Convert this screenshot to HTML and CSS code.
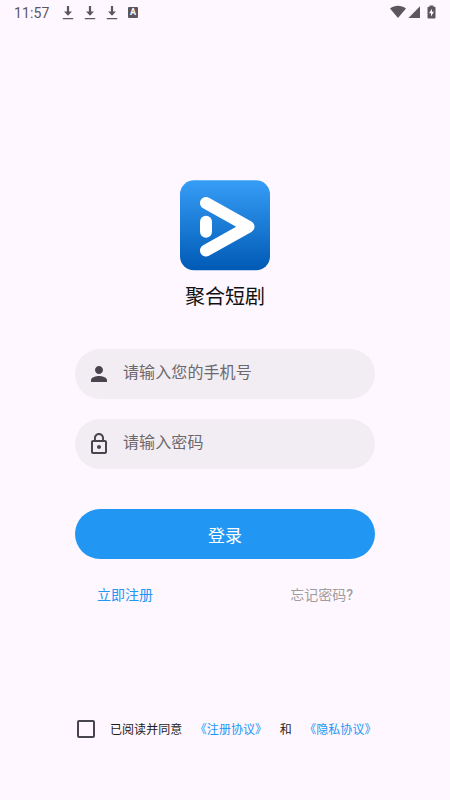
FILE: index.html
```html
<!DOCTYPE html>
<html lang="zh-CN">
<head>
<meta charset="utf-8">
<meta name="viewport" content="width=device-width, initial-scale=1">
<title>聚合短剧</title>
<link rel="stylesheet" href="styles.css">
</head>
<body>
<header class="status">
  <span class="clock">11:57</span>
  <svg class="download" viewBox="0 0 12 14"><path d="M4.900 0h2.200v5.500h2.900L6 9.800 2 5.500h2.900zM.8 12h10.400v1.200H.8z"/></svg>
  <svg class="download" viewBox="0 0 12 14"><path d="M4.900 0h2.200v5.500h2.900L6 9.800 2 5.500h2.900zM.8 12h10.400v1.200H.8z"/></svg>
  <svg class="download" viewBox="0 0 12 14"><path d="M4.900 0h2.200v5.500h2.900L6 9.800 2 5.500h2.900zM.8 12h10.400v1.200H.8z"/></svg>
  <span class="badge">A</span>
  <svg class="signals" viewBox="0 0 46 14">
    <path d="M0 2.400C4.800-1.200 11.200-1.200 16 2.400L8 12z"/>
    <path d="M30 .3v11.700H18.500z"/>
    <path fill-rule="evenodd" d="M39.600-.5h3.800V.7h1.100q1 0 1 1v9.700q0 1-1 1h-6q-1 0-1-1V1.700q0-1 1-1h1.100zM42 2.700l-3 4.500h2v3.200l3-4.600h-2z"/>
  </svg>
</header>
<main class="login">
  <svg class="logo" viewBox="0 0 90 90">
    <defs>
      <linearGradient id="sky" x1="0" y1="0" x2="0" y2="1">
        <stop offset="0" stop-color="#369df6"/>
        <stop offset="1" stop-color="#005ab5"/>
      </linearGradient>
    </defs>
    <rect y=".3" width="90" height="90" rx="14" fill="url(#sky)"/>
    <path d="M26 23L68.500 46.700 26 70.500" fill="none" stroke="#fff" stroke-width="12" stroke-linecap="round" stroke-linejoin="round"/>
    <rect x="20" y="35.800" width="12" height="22" rx="6" fill="#fff"/>
  </svg>
  <h1 class="title">聚合短剧</h1>
  <form class="form">
    <label class="field">
      <svg class="icon" viewBox="0 0 24 24"><path d="M12 12c2.210 0 4-1.790 4-4s-1.790-4-4-4-4 1.790-4 4 1.790 4 4 4zm0 2c-2.670 0-8 1.340-8 4v2h16v-2c0-2.660-5.330-4-8-4z"/></svg>
      <input class="input" type="tel" placeholder="请输入您的手机号">
    </label>
    <label class="field">
      <svg class="icon" viewBox="0 0 24 24"><path d="M12 17c1.100 0 2-.9 2-2s-.9-2-2-2-2 .9-2 2 .9 2 2 2zm6-9h-1V6c0-2.760-2.240-5-5-5S7 3.240 7 6v2H6c-1.100 0-2 .9-2 2v10c0 1.100.9 2 2 2h12c1.100 0 2-.9 2-2V10c0-1.100-.9-2-2-2zM8.900 6c0-1.710 1.390-3.100 3.100-3.100s3.100 1.390 3.100 3.100v2H8.900V6zM18 20H6V10h12v10z"/></svg>
      <input class="input" type="password" placeholder="请输入密码">
    </label>
    <button class="submit" type="button">登录</button>
  </form>
  <nav class="links">
    <a class="register">立即注册</a>
    <a class="forgot">忘记密码<b>?</b></a>
  </nav>
</main>
<footer class="terms">
  <span class="checkbox"></span>
  <span>已阅读并同意</span>
  <a class="policy">《注册协议》</a>
  <span>和</span>
  <a class="policy">《隐私协议》</a>
</footer>
</body>
</html>
```
FILE: styles.css
```css
* { box-sizing: border-box; }
body {
  margin: 0;
  height: 800px;
  display: flex;
  flex-direction: column;
  overflow: hidden;
  background: #fef7ff;
  color: #1d1b20;
  font-family: Roboto, "Noto Sans CJK SC", sans-serif;
}
.status {
  height: 25px;
  display: flex;
  align-items: center;
  padding: 0 14px;
  color: #5b575c;
  fill: #5b575c;
}
.clock { width: 48px; font-size: 14px; line-height: 26px; letter-spacing: .1px; }
.download { width: 12px; height: 14px; margin-right: 10px; }
.badge {
  width: 10px;
  height: 11px;
  border-radius: 1px;
  background: #5b575c;
  color: #fef7ff;
  font-size: 9px;
  font-weight: 700;
  line-height: 11px;
  text-align: center;
}
.signals { width: 46px; height: 14px; margin-left: auto; overflow: visible; }
.login {
  width: 300px;
  margin: 155px auto 0;
  display: flex;
  flex-direction: column;
  align-items: center;
}
.logo { width: 90px; height: 90px; overflow: visible; }
.title { margin: 12px 0 0; font-size: 20px; line-height: 30px; font-weight: 400; color: #111; }
.form { width: 100%; margin-top: 37px; display: flex; flex-direction: column; gap: 20px; }
.field {
  height: 50px;
  display: flex;
  align-items: center;
  padding: 0 12px;
  gap: 12px;
  border-radius: 25px;
  background: #f2edf3;
}
.icon { width: 24px; height: 24px; fill: #49454f; flex: none; }
.input {
  flex: 1;
  min-width: 0;
  height: 24px;
  margin-bottom: 4px;
  padding: 0;
  border: 0;
  outline: 0;
  background: none;
  font: inherit;
  font-size: 16px;
  letter-spacing: .1px;
}
.input::placeholder { color: #6c686d; opacity: 1; }
.submit {
  height: 50px;
  margin-top: 20px;
  padding: 0;
  border: 0;
  border-radius: 25px;
  background: #2196f3;
  color: #fff;
  font: inherit;
  font-size: 17px;
}
.links {
  width: 256px;
  margin-top: 26px;
  display: flex;
  justify-content: space-between;
  font-size: 14px;
  line-height: 20px;
}
.register { color: #2196f3; }
.forgot { color: #9e9e9e; }
.forgot b { font-weight: 500; }
.terms {
  width: 300px;
  margin: auto auto 59px;
  display: flex;
  align-items: center;
  font-size: 12px;
  letter-spacing: .05px;
  line-height: 22px;
  white-space: nowrap;
}
.checkbox { flex: none; width: 18px; height: 18px; margin: -3px 15px 0 2px; border: 2px solid #49454f; border-radius: 2px; }
.policy { margin: 0 12.500px; color: #2196f3; }
```
